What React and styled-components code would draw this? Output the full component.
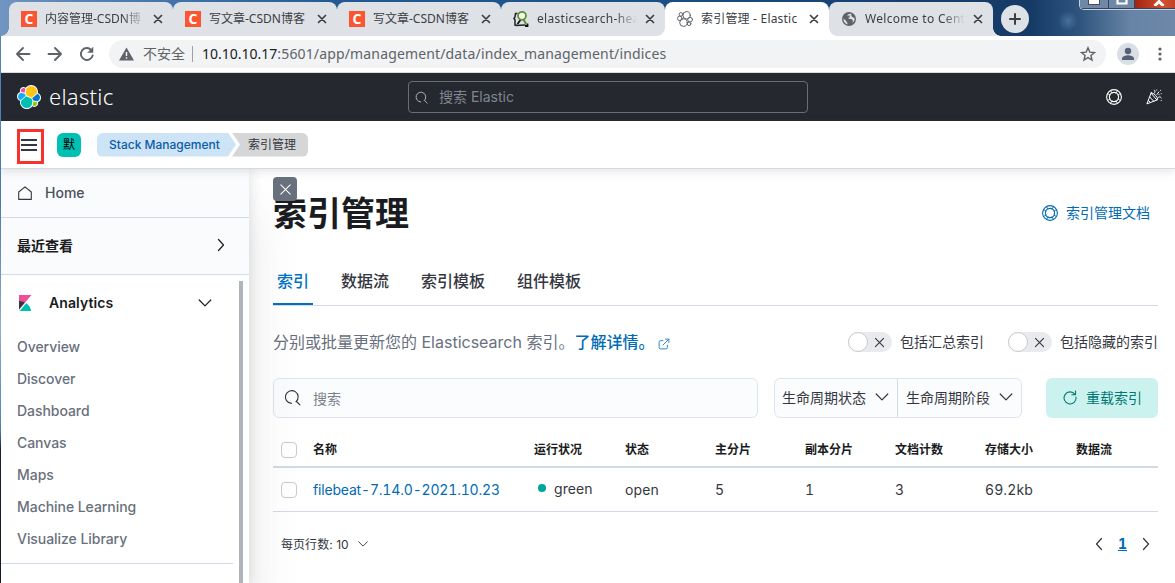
import React, { useState } from "react";
import styled, { createGlobalStyle, css } from "styled-components";

const GlobalStyle = createGlobalStyle`
  *,
  *::before,
  *::after {
    box-sizing: border-box;
  }
  body {
    margin: 0;
    overflow: hidden;
    font-family: Inter, "Noto Sans CJK SC", sans-serif;
    font-size: 14px;
    color: #343741;
  }
  svg {
    display: block;
    flex-shrink: 0;
  }
`;

const Window = styled.div`
  height: 583px;
  padding-left: 1px;
  display: flex;
  flex-direction: column;
  background: linear-gradient(#5b83b8 0, #4a7fc0 200px, #9cc0e6 330px, #4c8cc8 430px, #101c2c 450px, #0c1420 583px);
`;

/* ---------- browser ---------- */

const TabStrip = styled.div`
  height: 36px;
  margin-left: -1px;
  padding: 2px 0 0 9px;
  display: flex;
  flex-shrink: 0;
  background:
    radial-gradient(circle at 1068px 21px, rgba(90, 132, 178, 0.6) 0, rgba(71, 116, 168, 0) 10px),
    linear-gradient(90deg, #7195c0 0, #4f7db0 110px, #245a94 330px, #1c5189 600px, #184273 850px, #163a66 1030px, #2f557f 1080px, #6783a5 1130px, #6d88a9 1175px);
`;

const flare = css`
  content: "";
  position: absolute;
  bottom: 0;
  width: 8px;
  height: 8px;
`;

const Tab = styled.div`
  position: relative;
  width: 164px;
  height: 34px;
  padding: 0 9px 0 12px;
  display: flex;
  align-items: center;
  flex-shrink: 0;
  z-index: ${(props) => (props.$active ? 2 : 1)};
  border-radius: 8px 8px 0 0;
  background: ${(props) => (props.$active ? "#fff" : "#dee1e6")};
  color: #3c4043;
  &::before {
    ${flare}
    left: -8px;
    background: radial-gradient(circle at 0 0, transparent 7.5px, ${(props) => (props.$active ? "#fff" : "#dee1e6")} 8px);
  }
  &::after {
    ${flare}
    right: -8px;
    background: radial-gradient(circle at 100% 0, transparent 7.5px, ${(props) => (props.$active ? "#fff" : "#dee1e6")} 8px);
  }
`;

const TabDivider = styled.i`
  position: absolute;
  right: -1px;
  top: 7px;
  width: 1px;
  height: 20px;
  background: #80868b;
`;

/* keeps the strip solid where two idle tabs touch */
const TabJoin = styled.i`
  position: absolute;
  right: -4px;
  top: 7px;
  width: 8px;
  height: 27px;
  background: #dee1e6;
`;

const TabTitle = styled.span`
  width: 103px;
  height: 18px;
  margin-left: 8px;
  line-height: 18px;
  font-family: "Noto Sans", "Noto Sans CJK SC", sans-serif;
  font-size: 12px;
  letter-spacing: ${(props) => props.$spacing || 0}px;
  white-space: nowrap;
  ${(props) => props.$fade && "mask-image: linear-gradient(90deg, #000 78px, transparent 100px);"}
`;

const TabClose = styled.span`
  margin-left: auto;
`;

const CsdnMark = styled.span`
  width: 16px;
  height: 16px;
  flex-shrink: 0;
  background: #fc5531;
  color: #fff;
  font: 700 14px/16px "Open Sans", sans-serif;
  text-align: center;
`;

const NewTab = styled.div`
  width: 28px;
  height: 28px;
  margin: 3px 0 0 8px;
  border-radius: 50%;
  background: #dee1e6;
  display: grid;
  place-items: center;
`;

const WindowButtons = styled.div`
  width: 96px;
  height: 12px;
  margin: -4px 0 0 auto;
  display: flex;
  border: 1px solid #c5d1df;
  border-right: 0;
  border-radius: 0 0 0 5px;
  overflow: hidden;
`;

const WindowButton = styled.div`
  width: ${(props) => props.$width}px;
  flex-shrink: 0;
  display: flex;
  justify-content: center;
  padding-top: 1px;
  border-right: 1px solid #33465f;
  border-bottom: 1px solid #33465f;
  background: ${(props) => (props.$close ? "linear-gradient(90deg, #a3230f, #d2502f 60%, #b83a22)" : "#6f88a7")};
`;

const Toolbar = styled.div`
  height: 37px;
  flex-shrink: 0;
  padding: 0 7px 0 12px;
  display: flex;
  align-items: center;
  background: #fff;
  border-bottom: 1px solid #dadce0;
`;

const NavIcons = styled.div`
  display: flex;
  gap: 12px;
`;

const AddressBar = styled.div`
  width: 997px;
  height: 28px;
  margin-left: 12px;
  padding: 0 10px;
  display: flex;
  align-items: center;
  border-radius: 14px;
  background: #f1f3f4;
  color: #5f6368;
  font-family: "Noto Sans", "Noto Sans CJK SC", sans-serif;
  font-size: 14px;
  line-height: 20px;
  white-space: nowrap;
`;

const Insecure = styled.span`
  margin-left: 9px;
  padding-right: 7px;
  margin-right: 9px;
  border-right: 1px solid #9aa0a6;
  height: 16px;
  line-height: 15px;
`;

const Url = styled.span`
  flex: 1;
  letter-spacing: 0.15px;
  b {
    font-weight: 400;
    color: #202124;
    letter-spacing: 0;
  }
`;

const Profile = styled.div`
  width: 22px;
  height: 22px;
  margin: 0 13px 0 11px;
  border-radius: 50%;
  background: #dadfe6;
`;

/* ---------- kibana chrome ---------- */

const DarkHeader = styled.header`
  height: 48px;
  flex-shrink: 0;
  padding: 0 13px 0 16px;
  display: grid;
  grid-template-columns: 391px 400px 1fr;
  align-items: center;
  background: #25282f;
  color: #fff;
`;

const Brand = styled.div`
  display: flex;
  align-items: center;
  gap: 8px;
`;

const Wordmark = styled.span`
  font: 400 22px/26px "Noto Sans", sans-serif;
  font-weight: 300;
  letter-spacing: 0.3px;
  padding-bottom: 2px;
`;

const GlobalSearch = styled.div`
  height: 32px;
  padding: 0 0 2px 6px;
  display: flex;
  align-items: center;
  gap: 11px;
  border: 1px solid #6a6d74;
  border-radius: 4px;
  color: #81858f;
  svg {
    margin-top: 2px;
  }
`;

const HeaderActions = styled.div`
  display: flex;
  justify-content: flex-end;
  gap: 24px;
`;

const CrumbHeader = styled.div`
  position: relative;
  z-index: 3;
  height: 48px;
  flex-shrink: 0;
  padding-left: 20px;
  display: flex;
  align-items: center;
  background: #fff;
  border-bottom: 1px solid #d3dae6;
  box-shadow: 0 3px 8px rgba(100, 100, 100, 0.16);
`;

const MenuToggle = styled.div`
  position: relative;
  width: 16px;
  height: 12px;
  display: flex;
  flex-direction: column;
  justify-content: space-between;
  i {
    height: 2px;
    background: #343741;
  }
  &::after {
    content: "";
    position: absolute;
    left: -4px;
    top: -10px;
    width: 27px;
    height: 35px;
    border: 3px solid #f9322f;
  }
`;

const SpaceAvatar = styled.div`
  width: 24px;
  height: 24px;
  margin: 0 16px 0 20px;
  border-radius: 6px;
  background: #00bfb3;
  color: #000;
  font-size: 12px;
  line-height: 23px;
  text-align: center;
`;

const Crumb = styled.div`
  height: 24px;
  line-height: 24px;
  font-size: 12px;
  white-space: nowrap;
  ${(props) =>
    props.$last
      ? css`
          width: 76px;
          margin-left: -4px;
          padding-left: 16px;
          border-radius: 0 6px 6px 0;
          color: #343741;
          background: #d5d6d7;
          clip-path: polygon(0 0, 100% 0, 100% 100%, 0 100%, 8px 50%);
        `
      : css`
          width: 139px;
          padding-left: 12px;
          border-radius: 6px 0 0 6px;
          color: #0b5ca8;
          font-weight: 500;
          background: #cce4f5;
          clip-path: polygon(0 0, 131px 0, 100% 50%, 131px 100%, 0 100%);
        `}
`;

const Body = styled.div`
  flex: 1;
  min-height: 0;
  display: flex;
  background: #fff;
`;

/* ---------- side navigation ---------- */

const SideNav = styled.nav`
  position: relative;
  z-index: 2;
  width: 248px;
  flex-shrink: 0;
  display: flex;
  flex-direction: column;
  background: #fff;
  box-shadow: 0 0 12px rgba(70, 70, 75, 0.16), 0 40px 48px rgba(80, 80, 85, 0.14);
`;

const HomeLink = styled.div`
  height: 49px;
  padding: 0 0 1px 17px;
  display: flex;
  align-items: center;
  gap: 13px;
  background: #fafbfd;
  border-bottom: 1px solid #d3dae6;
  color: #4b4f5a;
  font-weight: 500;
`;

const Recent = styled.div`
  height: 57px;
  padding: 0 20px 2px 16px;
  display: flex;
  align-items: center;
  justify-content: space-between;
  background: #fafbfd;
  border-bottom: 1px solid #d3dae6;
  color: #1a1c21;
  font-weight: 600;
`;

const NavScroll = styled.div`
  flex: 1;
  min-height: 0;
  display: flex;
  justify-content: space-between;
  padding-right: 6px;
`;

const NavGroup = styled.div`
  width: 232px;
  height: 289px;
  border-bottom: 1px solid #d3dae6;
`;

const Thumb = styled.div`
  width: 4px;
  margin-top: 6px;
  background: #afb4bd;
`;

const GroupTitle = styled.div`
  height: 56px;
  padding: 0 20px 0 16px;
  display: flex;
  align-items: center;
  color: #1a1c21;
  font-weight: 600;
  span {
    flex: 1;
    margin-left: 16px;
    padding-bottom: 1px;
    letter-spacing: 0.1px;
  }
`;

const NavItem = styled.div`
  height: 32px;
  padding-left: 16px;
  line-height: 32px;
  color: #69707d;
  font-weight: 500;
  letter-spacing: -0.05px;
`;

/* ---------- index management ---------- */

const Main = styled.main`
  position: relative;
  flex: 1;
  padding: 24px 17px 0 24px;
`;

const CloseNav = styled.button`
  position: absolute;
  z-index: 3;
  left: 24px;
  top: 8px;
  width: 24px;
  height: 24px;
  padding: 0;
  display: grid;
  place-items: center;
  border: 0;
  border-radius: 4px;
  background: #69707d;
`;

const PageTitle = styled.div`
  height: 40px;
  display: flex;
  justify-content: space-between;
  align-items: center;
  h1 {
    margin: 0;
    padding-top: 2px;
    font-size: 34px;
    line-height: 40px;
    font-weight: 700;
    color: #1a1c21;
  }
`;

const DocLink = styled.a`
  display: flex;
  align-items: center;
  gap: 8px;
  padding: 0 8px 2px 0;
  color: #006bb4;
  svg {
    margin-top: 2px;
  }
`;

const PageTabs = styled.div`
  height: 48px;
  margin-top: 25px;
  display: flex;
  gap: 24px;
  border-bottom: 1px solid #d3dae6;
`;

const PageTab = styled.div`
  height: 47px;
  padding: 0 4px;
  line-height: 46px;
  font-size: 16px;
  font-weight: 500;
  color: ${(props) => (props.$active ? "#0071c2" : "#343741")};
  ${(props) => props.$active && "border-bottom: 2px solid #0071c2;"}
`;

const Intro = styled.div`
  height: 24px;
  margin-top: 24px;
  display: flex;
  align-items: center;
  color: #69707d;
  font-size: 16px;
  p {
    margin: 0;
    flex: 1;
    display: flex;
    align-items: center;
    white-space: pre;
    line-height: 24px;
  }
  a {
    color: #006bb4;
    font-weight: 500;
    margin-right: 4px;
  }
  p svg {
    margin-top: 3px;
  }
`;

const Toggle = styled.label`
  margin-left: 24px;
  display: flex;
  align-items: center;
  gap: 8px;
  font-size: 14px;
  line-height: 20px;
  color: #343741;
`;

const Track = styled.span`
  width: 44px;
  height: 20px;
  padding-right: 6px;
  display: flex;
  align-items: center;
  justify-content: space-between;
  border-radius: 10px;
  background: #e9eaee;
  i {
    width: 20px;
    height: 20px;
    border: 1px solid #c6c9d0;
    border-radius: 50%;
    background: #fff;
  }
`;

const Controls = styled.div`
  height: 40px;
  margin-top: 24px;
  display: flex;
`;

const SearchBox = styled.div`
  width: 485px;
  padding: 0 0 1px 10px;
  display: flex;
  align-items: center;
  gap: 12px;
  border: 1px solid #dfe4ee;
  border-radius: 6px;
  background: #fbfcfd;
  color: #7b818d;
`;

const Filters = styled.div`
  width: 248px;
  margin: 0 24px 0 16px;
  display: grid;
  grid-template-columns: 122px 1fr;
  border: 1px solid #dfe4ee;
  border-radius: 6px;
  background: #fbfcfd;
`;

const Filter = styled.div`
  padding: 0 7px 2px 7px;
  display: flex;
  align-items: center;
  justify-content: space-between;
  & + & {
    padding-left: 8px;
    border-left: 1px solid #d3dae6;
  }
`;

const Reload = styled.div`
  width: 112px;
  padding-bottom: 2px;
  display: flex;
  align-items: center;
  justify-content: center;
  gap: 8px;
  border-radius: 6px;
  background: #ccf2f0;
  color: #007871;
`;

const Row = styled.div`
  display: grid;
  grid-template-columns: 40px 221px 91px 90px 90px 90px 90px 91px 1fr;
  align-items: center;
  height: ${(props) => (props.$head ? 34 : 44)}px;
  margin-top: ${(props) => (props.$head ? 16 : 0)}px;
  border-bottom: ${(props) => (props.$head ? 2 : 1)}px solid #d3dae6;
  ${(props) =>
    props.$head
      ? css`
          color: #1a1c21;
          font-size: 12px;
          font-weight: 600;
          span + span {
            padding-bottom: 3px;
          }
        `
      : css`
          letter-spacing: 0.1px;
          font-feature-settings: "tnum";
        `}
`;

const Checkbox = styled.span`
  width: 16px;
  height: 16px;
  margin-left: 8px;
  border: 1px solid #c9cbcd;
  border-radius: 4px;
  background: #fff;
`;

const IndexName = styled.a`
  color: #006bb4;
  letter-spacing: -0.18px;
`;

const Health = styled.span`
  display: flex;
  align-items: center;
  gap: 8px;
  padding: 0 0 3px 4px;
  &::before {
    content: "";
    width: 8px;
    height: 8px;
    border-radius: 50%;
    background: #00a69b;
  }
`;

const Footer = styled.div`
  height: 24px;
  margin-top: 20px;
  padding: 0 4px 1px 8px;
  display: flex;
  align-items: center;
  justify-content: space-between;
  font-size: 12px;
`;

const PageSize = styled.div`
  display: flex;
  align-items: center;
  gap: 8px;
  letter-spacing: 0.05px;
`;

const Pager = styled.div`
  display: flex;
  align-items: center;
  gap: 11px;
  b {
    color: #006bb4;
    font-size: 14px;
    font-weight: 700;
    text-decoration: underline;
    font-feature-settings: "tnum";
  }
`;

/* ---------- icons ---------- */

function Icon({ size = 16, box = 16, width = 1.1, color = "currentColor", d, children }) {
  return (
    <svg
      width={size}
      height={size}
      viewBox={`0 0 ${box} ${box}`}
      fill="none"
      stroke={color}
      strokeWidth={width}
      strokeLinecap="round"
      strokeLinejoin="round">
      {d && <path d={d} />}
      {children}
    </svg>
  );
}

const Chevron = ({ dir = "down", size = 16 }) => {
  const paths = {
    down: "M2.2 5L8 10.8 13.8 5",
    right: "M5.5 2.5l5 5.5-5 5.5",
    left: "M10.5 2.5L5.5 8l5 5.5",
  };
  return <Icon size={size} width={1.2} d={paths[dir]} />;
};

const Magnifier = ({ size = 16, color }) => (
  <Icon size={size} color={color} width={1.05} d="M11.3 12A6 6 0 1 0 7 13.5M12 12l3 3" />
);

const LifeRing = () => (
  <Icon width={1.1}>
    <circle cx="8" cy="8" r="7.4" />
    <circle cx="8" cy="8" r="4.6" />
    <path
      d="M4.6 1.700l1.400 2.400M1.700 4.600l2.400 1.400M11.400 1.700L10 4.100M14.300 4.600L11.900 6M4.600 14.300L6 11.900M1.700 11.400L4.100 10M11.400 14.300L10 11.900M14.300 11.400L11.900 10"
      strokeWidth="0.9"
    />
  </Icon>
);

const Cheer = () => (
  <Icon width={1}>
    <path d="M5.2 3.8L.9 14.9l10.9-4.2c-.6-3.2-3.2-6.4-6.6-6.9zM3.7 8l4 4.2M2.3 11.4l2.3 2.2M5.3 4.4l5.3 6.3M8.2 4.3c1.1-1 1-2.2.2-3.2M11 5.5L12.8 3M12 8.5c1.2-1 2.4-.8 3.3.3" />
    <path d="M10.7 1v.1M14.6 1.3v.1M13 5.7h.1M15.2 4.7v.1M15.2 11.5v.1" />
  </Icon>
);

const Cross = ({ size = 16, color, width = 1.2 }) => (
  <Icon size={size} color={color} width={width} d="M3 3l10 10M13 3L3 13" />
);

const ElasticLogo = () => (
  <svg width="24" height="24" viewBox="0 0 32 32">
    <path fill="#fff" d="M32 16.77c0-2.68-1.66-5.02-4.16-5.94.11-.57.17-1.14.17-1.74C28.01 4.07 23.94 0 18.93 0c-2.94 0-5.68 1.4-7.39 3.79a4.8 4.8 0 0 0-2.93-1C5.96 2.79 3.8 4.95 3.8 7.6c0 .57.1 1.13.29 1.66A6.35 6.35 0 0 0 0 15.23c0 2.69 1.67 5.04 4.18 5.96-.11.56-.17 1.14-.17 1.73 0 5 4.07 9.07 9.07 9.07 2.94 0 5.65-1.41 7.35-3.8a4.8 4.8 0 0 0 2.95 1.02c2.65 0 4.81-2.16 4.81-4.81 0-.57-.1-1.13-.29-1.66A6.36 6.36 0 0 0 32 16.77" />
    <path fill="#fec514" d="M12.58 13.79l7 3.2 7.07-6.2a7.85 7.85 0 0 0 .15-1.56 7.78 7.78 0 0 0-14.17-4.4l-1.18 6.1z" />
    <path fill="#00bfb3" d="M5.33 21.23a7.96 7.96 0 0 0-.15 1.58 7.8 7.8 0 0 0 14.27 4.37l1.17-6.09-1.56-2.98-7.03-3.2z" />
    <path fill="#f04e98" d="M5.29 9.09l4.8 1.13 1.05-5.45a3.79 3.79 0 0 0-5.85 4.32" />
    <path fill="#1ba9f5" d="M4.87 10.23a5.37 5.37 0 0 0-3.53 5.03c0 2.27 1.4 4.29 3.51 5.09l6.73-6.08-1.23-2.64z" />
    <path fill="#93c90e" d="M20.87 27.18a3.79 3.79 0 0 0 5.84-4.31l-4.79-1.12z" />
    <path fill="#07c" d="M21.85 20.56l5.27 1.23a5.38 5.38 0 0 0 3.54-5.03c0-2.26-1.4-4.29-3.51-5.09l-6.9 6.05z" />
  </svg>
);

const KibanaLogo = () => (
  <svg width="16" height="16" viewBox="0 0 32 32">
    <path fill="#f04e98" d="M4 0v28.79L28.94.02z" />
    <path fill="#343741" d="M4 12v16.79l11.9-13.72A25 25 0 0 0 4 12" />
    <path fill="#00bfb3" d="M18.48 16.45L5 32h23.2a23.3 23.3 0 0 0-9.72-15.55" />
  </svg>
);

const ElasticOutline = () => (
  <Icon color="#5f6368" width={1}>
    <circle cx="9.6" cy="4.3" r="3.7" />
    <circle cx="6.5" cy="11.6" r="3.8" />
    <circle cx="2.8" cy="7.4" r="2.3" />
    <circle cx="13.1" cy="8.6" r="2.4" />
    <circle cx="3.9" cy="3.4" r="1.8" />
    <circle cx="12.1" cy="12.8" r="1.8" />
  </Icon>
);

const HeadIcon = () => (
  <svg width="16" height="16" viewBox="0 0 16 16" fill="none">
    <path d="M4.5 2.5h-2L2 6 1 7.5 2 9v5l3 .5M2.5 14.5l10-.5" stroke="#222" strokeWidth="1.5" />
    <path d="M4.5 13l3-4M12 15h2.5v-2.5" stroke="#111" strokeWidth="1.8" />
    <circle cx="9" cy="4.8" r="4" fill="#f1f6ec" stroke="#5f8f36" strokeWidth="1.7" />
    <path d="M10.5 8.5l2.500 4.500" stroke="#5f8f36" strokeWidth="2" />
  </svg>
);

const Globe = () => (
  <svg width="16" height="16" viewBox="0 0 16 16">
    <circle cx="8" cy="8" r="7" fill="#5f6368" />
    <path d="M2.5 7.6l2.7 2.3c.4 1.2 1.3 1 1.5 3.6a5.700 5.700 0 0 1-4.200-5.900M6 4.500c1.500-1.800 3.500-1.700 4.200-1.700l.2 1.600-2 .8.3 1.500H6.800l1.500 1.300 2.200.1 1.600 1.800-1 1.900c2-.8 2.800-3 2.400-4.800l-2.300-.9-.8-1.300" fill="#dee1e6" />
  </svg>
);

const tabs = [
  { title: "内容管理-CSDN博", icon: <CsdnMark>C</CsdnMark>, fade: true },
  { title: "写文章-CSDN博客", icon: <CsdnMark>C</CsdnMark> },
  { title: "写文章-CSDN博客", icon: <CsdnMark>C</CsdnMark> },
  { title: "elasticsearch-hea", icon: <HeadIcon />, fade: true, spacing: 0.3 },
  { title: "索引管理 - Elastic", icon: <ElasticOutline />, active: true, spacing: 0.2 },
  { title: "Welcome to Cent", icon: <Globe />, fade: true, spacing: 0.3 },
];

const navItems = [
  "Overview",
  "Discover",
  "Dashboard",
  "Canvas",
  "Maps",
  "Machine Learning",
  "Visualize Library",
];

const pageTabs = ["索引", "数据流", "索引模板", "组件模板"];

const columns = ["名称", "运行状况", "状态", "主分片", "副本分片", "文档计数", "存储大小", "数据流"];

function Browser() {
  return (
    <>
      <TabStrip>
        {tabs.map((tab, i) => (
          <Tab key={i} $active={tab.active}>
            {i < 3 && <TabJoin />}
            {i < 3 && <TabDivider />}
            {tab.icon}
            <TabTitle $fade={tab.fade} $spacing={tab.spacing}>
              {tab.title}
            </TabTitle>
            <TabClose>
              <Icon size={12} box={12} width={1.7} color="#3c4043" d="M2.5 2.5l7 7M9.5 2.5l-7 7" />
            </TabClose>
          </Tab>
        ))}
        <NewTab>
          <Icon size={14} box={14} width={2} color="#3c4043" d="M7 2v10M2 7h10" />
        </NewTab>
        <WindowButtons>
          <WindowButton $width={29}>
            <svg width="12" height="6">
              <rect x=".5" y="-1" width="11" height="5.5" fill="#fff" stroke="#444d5c" />
            </svg>
          </WindowButton>
          <WindowButton $width={26}>
            <svg width="12" height="6">
              <path d="M1.5 0v3.5h9V0" fill="none" stroke="#fff" strokeWidth="2.2" />
            </svg>
          </WindowButton>
          <WindowButton $width={48} $close>
            <svg width="12" height="6">
              <path d="M1.5 6L6 1.500 10.500 6" fill="none" stroke="#fff" strokeWidth="3" />
            </svg>
          </WindowButton>
        </WindowButtons>
      </TabStrip>
      <Toolbar>
        <NavIcons>
          <Icon size={20} box={20} width={1.9} color="#5f6368" d="M16.5 10h-12M10 4l-6 6 6 6" />
          <Icon size={20} box={20} width={1.9} color="#5f6368" d="M3.5 10h12M10 4l6 6-6 6" />
          <Icon size={20} box={20} width={1.9} color="#5f6368">
            <path d="M14.2 5.8a6 6 0 1 0 1.500 5.700" />
            <path d="M16 3.5v5h-5z" fill="#5f6368" strokeWidth=".5" />
          </Icon>
        </NavIcons>
        <AddressBar>
          <svg width="15" height="14" viewBox="0 0 15 14">
            <path d="M7.5.5L15 13.500H0z" fill="#5f6368" />
            <path d="M7.5 5v4M7.5 10.300v1.500" stroke="#f1f3f4" strokeWidth="1.5" />
          </svg>
          <Insecure>不安全</Insecure>
          <Url>
            <b>10.10.10.17</b>:5601/app/management/data/index_management/indices
          </Url>
          <svg width="16" height="16" viewBox="0 0 16 16" fill="none" stroke="#5f6368" strokeWidth="1.4">
            <path d="M8 1.8l1.800 4.300 4.700.4-3.600 3 1.100 4.600L8 11.600l-4 2.500 1.100-4.600-3.600-3 4.700-.4z" />
          </svg>
        </AddressBar>
        <Profile>
          <svg width="22" height="22" viewBox="0 0 22 22" fill="#566074">
            <circle cx="11" cy="8" r="3.2" />
            <path d="M5 17v-1.500c0-2.200 4-3.200 6-3.200s6 1 6 3.200V17z" />
          </svg>
        </Profile>
        <svg width="16" height="16" viewBox="0 0 16 16" fill="#5f6368">
          <circle cx="8" cy="3" r="1.6" />
          <circle cx="8" cy="8" r="1.6" />
          <circle cx="8" cy="13" r="1.6" />
        </svg>
      </Toolbar>
    </>
  );
}

function App() {
  const [activeTab, setActiveTab] = useState(0);

  return (
    <Window>
      <GlobalStyle />
      <Browser />
      <DarkHeader>
        <Brand>
          <ElasticLogo />
          <Wordmark>elastic</Wordmark>
        </Brand>
        <GlobalSearch>
          <Magnifier size={13} color="#c4c7cd" />
          搜索 Elastic
        </GlobalSearch>
        <HeaderActions>
          <LifeRing />
          <Cheer />
        </HeaderActions>
      </DarkHeader>
      <CrumbHeader>
        <MenuToggle>
          <i />
          <i />
          <i />
        </MenuToggle>
        <SpaceAvatar>默</SpaceAvatar>
        <Crumb>Stack Management</Crumb>
        <Crumb $last>索引管理</Crumb>
      </CrumbHeader>
      <Body>
        <SideNav>
          <HomeLink>
            <Icon size={14} box={14} width={1.1} color="#343741" d="M.7 6L7 .8 13.3 6v7.400H.7z" />
            Home
          </HomeLink>
          <Recent>
            最近查看
            <Chevron dir="right" />
          </Recent>
          <NavScroll>
            <NavGroup>
              <GroupTitle>
                <KibanaLogo />
                <span>Analytics</span>
                <Chevron />
              </GroupTitle>
              {navItems.map((item) => (
                <NavItem key={item}>{item}</NavItem>
              ))}
            </NavGroup>
            <Thumb />
          </NavScroll>
        </SideNav>
        <Main>
          <CloseNav>
            <Cross color="#fff" size={15} width={1.1} />
          </CloseNav>
          <PageTitle>
            <h1>索引管理</h1>
            <DocLink>
              <LifeRing />
              索引管理文档
            </DocLink>
          </PageTitle>
          <PageTabs>
            {pageTabs.map((label, i) => (
              <PageTab key={label} $active={i === activeTab} onClick={() => setActiveTab(i)}>
                {label}
              </PageTab>
            ))}
          </PageTabs>
          <Intro>
            <p>
              分别或批量更新您的 Elasticsearch 索引。<a>了解详情。</a>
              <Icon size={12} color="#2f86c3" width={1.3} d="M6.5 3.5h-3a2 2 0 0 0-2 2v7a2 2 0 0 0 2 2h7a2 2 0 0 0 2-2v-3M6.500 9.500l8-8M10 1.500h4.500V6" />
            </p>
            <Toggle>
              <Track>
                <i />
                <Cross size={13} width={1.4} />
              </Track>
              <span>包括汇总索引</span>
            </Toggle>
            <Toggle>
              <Track>
                <i />
                <Cross size={13} width={1.4} />
              </Track>
              <span>包括隐藏的索引</span>
            </Toggle>
          </Intro>
          <Controls>
            <SearchBox>
              <Magnifier size={17} color="#343741" />
              搜索
            </SearchBox>
            <Filters>
              <Filter>
                生命周期状态
                <Chevron />
              </Filter>
              <Filter>
                生命周期阶段
                <Chevron />
              </Filter>
            </Filters>
            <Reload>
              <Icon d="M13 5.5A6 6 0 1 0 14 8M13.500 2v3.700H9.800" />
              重载索引
            </Reload>
          </Controls>
          <Row $head>
            <Checkbox />
            {columns.map((column) => (
              <span key={column}>{column}</span>
            ))}
          </Row>
          <Row>
            <Checkbox />
            <IndexName>filebeat-7.14.0-2021.10.23</IndexName>
            <Health>green</Health>
            <span>open</span>
            <span>5</span>
            <span>1</span>
            <span>3</span>
            <span>69.2kb</span>
          </Row>
          <Footer>
            <PageSize>
              每页行数: 10
              <Chevron size={12} />
            </PageSize>
            <Pager>
              <Chevron dir="left" />
              <b>1</b>
              <Chevron dir="right" />
            </Pager>
          </Footer>
        </Main>
      </Body>
    </Window>
  );
}

export default App;
